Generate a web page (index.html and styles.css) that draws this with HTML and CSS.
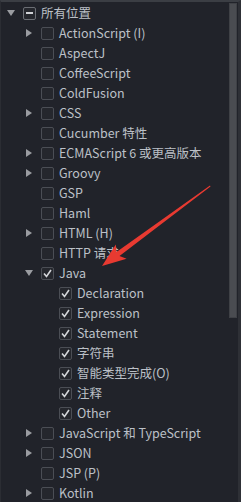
FILE: index.html
```html
<!DOCTYPE html>
<html>
<head>
<meta charset="utf-8">
<link rel="stylesheet" href="styles.css">
</head>
<body>
<div class="panel">
  <div class="tree">
    <div class="row l0"><span class="tw"><svg width="10" height="10" viewBox="0 0 10 10"><polygon points="1,2 9,2 5,8" /></svg></span><span class="cb partial"><span class="dash"></span></span><span class="lbl">所有位置</span></div>
    <div class="row l1"><span class="tw"><svg width="10" height="10" viewBox="0 0 10 10"><polygon points="2,1 8,5 2,9" /></svg></span><span class="cb"></span><span class="lbl">ActionScript (I)</span></div>
    <div class="row l1"><span class="tw"></span><span class="cb"></span><span class="lbl">AspectJ</span></div>
    <div class="row l1"><span class="tw"></span><span class="cb"></span><span class="lbl">CoffeeScript</span></div>
    <div class="row l1"><span class="tw"></span><span class="cb"></span><span class="lbl">ColdFusion</span></div>
    <div class="row l1"><span class="tw"><svg width="10" height="10" viewBox="0 0 10 10"><polygon points="2,1 8,5 2,9" /></svg></span><span class="cb"></span><span class="lbl">CSS</span></div>
    <div class="row l1"><span class="tw"></span><span class="cb"></span><span class="lbl">Cucumber 特性</span></div>
    <div class="row l1"><span class="tw"><svg width="10" height="10" viewBox="0 0 10 10"><polygon points="2,1 8,5 2,9" /></svg></span><span class="cb"></span><span class="lbl">ECMAScript 6 或更高版本</span></div>
    <div class="row l1"><span class="tw"><svg width="10" height="10" viewBox="0 0 10 10"><polygon points="2,1 8,5 2,9" /></svg></span><span class="cb"></span><span class="lbl">Groovy</span></div>
    <div class="row l1"><span class="tw"></span><span class="cb"></span><span class="lbl">GSP</span></div>
    <div class="row l1"><span class="tw"></span><span class="cb"></span><span class="lbl">Haml</span></div>
    <div class="row l1"><span class="tw"><svg width="10" height="10" viewBox="0 0 10 10"><polygon points="2,1 8,5 2,9" /></svg></span><span class="cb"></span><span class="lbl">HTML (H)</span></div>
    <div class="row l1"><span class="tw"></span><span class="cb"></span><span class="lbl">HTTP 请求</span></div>
    <div class="row l1"><span class="tw"><svg width="10" height="10" viewBox="0 0 10 10"><polygon points="1,2 9,2 5,8" /></svg></span><span class="cb checked"><svg width="11" height="11" viewBox="0 0 11 11"><polyline points="2,5.5 4.5,8.5 9,2" /></svg></span><span class="lbl">Java</span></div>
    <div class="row l2"><span class="tw"></span><span class="cb checked"><svg width="11" height="11" viewBox="0 0 11 11"><polyline points="2,5.5 4.5,8.5 9,2" /></svg></span><span class="lbl">Declaration</span></div>
    <div class="row l2"><span class="tw"></span><span class="cb checked"><svg width="11" height="11" viewBox="0 0 11 11"><polyline points="2,5.5 4.5,8.5 9,2" /></svg></span><span class="lbl">Expression</span></div>
    <div class="row l2"><span class="tw"></span><span class="cb checked"><svg width="11" height="11" viewBox="0 0 11 11"><polyline points="2,5.5 4.5,8.5 9,2" /></svg></span><span class="lbl">Statement</span></div>
    <div class="row l2"><span class="tw"></span><span class="cb checked"><svg width="11" height="11" viewBox="0 0 11 11"><polyline points="2,5.5 4.5,8.5 9,2" /></svg></span><span class="lbl">字符串</span></div>
    <div class="row l2"><span class="tw"></span><span class="cb checked"><svg width="11" height="11" viewBox="0 0 11 11"><polyline points="2,5.5 4.5,8.5 9,2" /></svg></span><span class="lbl">智能类型完成(O)</span></div>
    <div class="row l2"><span class="tw"></span><span class="cb checked"><svg width="11" height="11" viewBox="0 0 11 11"><polyline points="2,5.5 4.5,8.5 9,2" /></svg></span><span class="lbl">注释</span></div>
    <div class="row l2"><span class="tw"></span><span class="cb checked"><svg width="11" height="11" viewBox="0 0 11 11"><polyline points="2,5.5 4.5,8.5 9,2" /></svg></span><span class="lbl">Other</span></div>
    <div class="row l1"><span class="tw"><svg width="10" height="10" viewBox="0 0 10 10"><polygon points="2,1 8,5 2,9" /></svg></span><span class="cb"></span><span class="lbl">JavaScript 和 TypeScript</span></div>
    <div class="row l1"><span class="tw"><svg width="10" height="10" viewBox="0 0 10 10"><polygon points="2,1 8,5 2,9" /></svg></span><span class="cb"></span><span class="lbl">JSON</span></div>
    <div class="row l1"><span class="tw"></span><span class="cb"></span><span class="lbl">JSP (P)</span></div>
    <div class="row l1"><span class="tw"><svg width="10" height="10" viewBox="0 0 10 10"><polygon points="2,1 8,5 2,9" /></svg></span><span class="cb"></span><span class="lbl">Kotlin</span></div>
  </div>
  <div class="scroll"><div class="thumb"></div></div>
  <svg class="arrow" width="241" height="502" viewBox="0 0 241 502"><polygon points="210,185.5 116.5,252 115.8,244.4 102,266 126.6,258.8 119.5,256 210.5,186.5" /></svg>
</div>
</body>
</html>
```
FILE: styles.css
```css
html, body {
  margin: 0;
  padding: 0;
  background: #21232a;
  overflow: hidden;
}
.panel {
  position: relative;
  width: 241px;
  height: 502px;
  box-sizing: border-box;
  border-top: 2px solid #3b3e44;
  border-left: 1px solid #2b2d33;
  border-right: 3px solid #2e3036;
  display: flex;
  background: #21232a;
  font-family: "Noto Sans CJK SC", "Noto Sans", sans-serif;
  font-size: 12.5px;
  color: #bcc0c7;
  overflow: hidden;
}
.tree {
  flex: 1;
  padding-top: 1px;
  min-width: 0;
}
.row {
  height: 20px;
  display: flex;
  align-items: center;
  white-space: nowrap;
}
.l0 { padding-left: 3px; }
.l1 { padding-left: 21px; }
.l2 { padding-left: 39px; }
.tw {
  width: 19px;
  height: 20px;
  display: flex;
  align-items: center;
  padding-left: 2px;
  box-sizing: border-box;
}
.tw svg { fill: #9a9ca1; }
.cb {
  width: 13px;
  height: 13px;
  box-sizing: border-box;
  border: 1px solid #4b4e55;
  border-radius: 2px;
  background: #25272d;
  display: flex;
  align-items: center;
  justify-content: center;
  margin-right: 5px;
  flex: none;
}
.cb.partial { border-color: #6b6e74; }
.dash {
  width: 7px;
  height: 2px;
  background: #d0d2d6;
}
.cb svg polyline {
  fill: none;
  stroke: #d4d6da;
  stroke-width: 1.6;
}
.lbl { line-height: 20px; }
.scroll {
  width: 9px;
  padding-top: 1px;
  flex: none;
}
.thumb {
  width: 8px;
  height: 315px;
  background: #4a4c51;
  border: 1px solid #3f4146;
  box-sizing: border-box;
}
.arrow {
  position: absolute;
  left: -1px;
  top: -2px;
  fill: #e83a31;
}
```
